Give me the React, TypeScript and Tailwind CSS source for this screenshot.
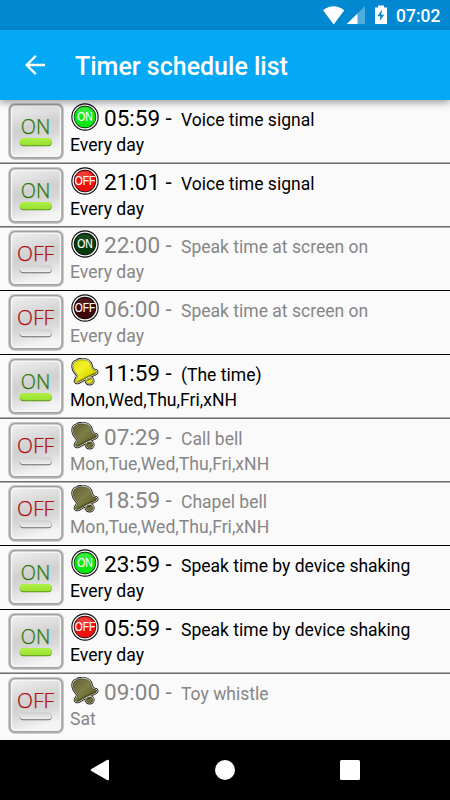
type Kind = 'on' | 'off' | 'bell';

interface Timer {
  enabled: boolean;
  kind: Kind;
  time: string;
  label: string;
  days: string;
}

const TIMERS: Timer[] = [
  { enabled: true, kind: 'on', time: '05:59', label: 'Voice time signal', days: 'Every day' },
  { enabled: true, kind: 'off', time: '21:01', label: 'Voice time signal', days: 'Every day' },
  { enabled: false, kind: 'on', time: '22:00', label: 'Speak time at screen on', days: 'Every day' },
  { enabled: false, kind: 'off', time: '06:00', label: 'Speak time at screen on', days: 'Every day' },
  { enabled: true, kind: 'bell', time: '11:59', label: '(The time)', days: 'Mon,Wed,Thu,Fri,xNH' },
  { enabled: false, kind: 'bell', time: '07:29', label: 'Call bell', days: 'Mon,Tue,Wed,Thu,Fri,xNH' },
  { enabled: false, kind: 'bell', time: '18:59', label: 'Chapel bell', days: 'Mon,Tue,Wed,Thu,Fri,xNH' },
  { enabled: true, kind: 'on', time: '23:59', label: 'Speak time by device shaking', days: 'Every day' },
  { enabled: true, kind: 'off', time: '05:59', label: 'Speak time by device shaking', days: 'Every day' },
  { enabled: false, kind: 'bell', time: '09:00', label: 'Toy whistle', days: 'Sat' },
];

// Rows are 63.75px apart, so heights and divider weights repeat every four rows.
const ROW_HEIGHTS = ['h-[64px]', 'h-[63px]', 'h-[64px]', 'h-[64px]'];
const DIVIDERS = [
  'bottom-0 h-[2px] border-t border-[#adadad] bg-[#6f6f6f]',
  '-bottom-px h-[2px] border-t border-[#6f6f6f] bg-[#adadad]',
  'bottom-0 h-px bg-black',
  'bottom-0 h-px bg-black',
];

// Shared gradients, referenced by id from the row icons.
function Gradients() {
  return (
    <svg width="0" height="0" className="absolute" aria-hidden>
      <defs>
        <linearGradient id="metal" x1="0" y1="0" x2="0.25" y2="1">
          <stop offset="0" stopColor="#f2f2f2" />
          <stop offset="0.5" stopColor="#d0d0d0" />
          <stop offset="0.7" stopColor="#d8d8d8" />
          <stop offset="1" stopColor="#f4f4f4" />
        </linearGradient>
        <linearGradient id="bar-on" x1="0" y1="0" x2="0" y2="1">
          <stop offset="0" stopColor="#b0ee48" />
          <stop offset="1" stopColor="#98e22e" />
        </linearGradient>
        <linearGradient id="bar-off" x1="0" y1="0" x2="0" y2="1">
          <stop offset="0" stopColor="#cecece" />
          <stop offset="1" stopColor="#f0f0f0" />
        </linearGradient>
        <linearGradient id="bell-on" x1="0" y1="0" x2="1" y2="1">
          <stop offset="0" stopColor="#dcdc00" />
          <stop offset="0.35" stopColor="#f2f22c" />
          <stop offset="0.65" stopColor="#e0e000" />
          <stop offset="1" stopColor="#909000" />
        </linearGradient>
        <linearGradient id="bell-off" x1="0" y1="0" x2="1" y2="1">
          <stop offset="0" stopColor="#606034" />
          <stop offset="0.45" stopColor="#7e7e48" />
          <stop offset="1" stopColor="#50501c" />
        </linearGradient>
      </defs>
    </svg>
  );
}

function ToggleButton({ on }: { on: boolean }) {
  return (
    <svg width="56" height="58" viewBox="0 0 56 58" className="block">
      <rect x="1.4" y="1.2" width="53.2" height="54.4" rx="5.5" fill="none" stroke="#000" strokeWidth="2.8" opacity="0.2" />
      <rect x="2" y="1.8" width="52" height="53" rx="5" fill="url(#metal)" stroke="#a0a0a0" strokeWidth="1.6" />
      <rect x="3.6" y="3.4" width="48.8" height="49.8" rx="3.6" fill="none" stroke="#f6f6f6" strokeWidth="1.4" />
      <text
        x="27.5" y="30.9" textAnchor="middle" fontSize="20.3"
        textLength={on ? 29.5 : 37} lengthAdjust="spacingAndGlyphs"
        fill={on ? '#2c7808' : '#b00c12'} stroke={on ? '#2c7808' : '#b00c12'} strokeWidth="0.25"
        className="font-['Open_Sans',sans-serif] font-light"
      >
        {on ? 'ON' : 'OFF'}
      </text>
      <rect x="11.8" y="36" width="32" height="7.2" rx="3.6" fill={on ? '#5c9222' : '#686868'} />
      <rect x="11.8" y="35" width="32" height="7.2" rx="3.6" fill={on ? 'url(#bar-on)' : 'url(#bar-off)'} />
    </svg>
  );
}

function Badge({ kind, bright }: { kind: 'on' | 'off'; bright: boolean }) {
  const fill = kind === 'on' ? (bright ? '#08e810' : '#043a08') : bright ? '#f01010' : '#400608';
  return (
    <svg width="28" height="28" viewBox="0 0 28 28" className="block">
      <circle cx="14" cy="14" r="13.7" fill="#0c0c0c" />
      <circle cx="14" cy="14" r="11.9" fill="none" stroke="#f8f8f8" strokeWidth="1.4" />
      <circle cx="14" cy="14" r="10.6" fill={fill} />
      <ellipse cx="13.5" cy="8.4" rx="7" ry="4" fill="#fff" opacity={bright ? 0.18 : 0.08} />
      <text
        x="14" y="18.2" textAnchor="middle" fontSize="12" fill="#fff" stroke="#fff" strokeWidth="0.15"
        textLength={kind === 'on' ? 15.5 : 20.5} lengthAdjust="spacingAndGlyphs"
        className="font-['Liberation_Sans',sans-serif]"
      >
        {kind === 'on' ? 'ON' : 'OFF'}
      </text>
    </svg>
  );
}

function Bell({ bright }: { bright: boolean }) {
  const body = 'M2.2 6.4C2.8 4.2 4.6 3.4 6 3.2C7 1.7 9.4 1.6 11.4 2.1C14.6 1.6 17.4 2.6 19 5C20.6 7.6 20.2 10.4 22.2 11.8L25.6 13C26.2 14 25.4 15.2 23.8 16L16 19.4L7.2 24.4C5.8 25 4.2 24 4.4 22.8C4.8 21.2 7 19.6 6.6 17.6C6 15 3.4 14.4 2.6 11.4C2.2 9.8 1.8 8 2.2 6.4Z';
  const fill = bright ? 'url(#bell-on)' : 'url(#bell-off)';
  return (
    <svg width="28" height="29" viewBox="0 0 28 29" className="block overflow-visible">
      <g fill="#141414" stroke="#141414" strokeWidth="3.4" strokeLinejoin="round">
        <path d={body} />
        <ellipse cx="18.6" cy="22.8" rx="3.3" ry="2.9" />
      </g>
      <g fill="#f4f4ec" stroke="#f4f4ec" strokeWidth="1.7" strokeLinejoin="round">
        <path d={body} />
        <ellipse cx="18.6" cy="22.8" rx="3.3" ry="2.9" />
      </g>
      <g fill={fill} stroke={bright ? '#585804' : '#2c2c10'} strokeWidth="0.5">
        <ellipse cx="18.6" cy="22.8" rx="3.3" ry="2.9" />
        <path d={body} />
      </g>
      <path d="M6.2 24L16 18.8L24.8 14.8" fill="none" stroke="#2c2c04" strokeWidth="1.1" opacity="0.5" />
      <path d="M16.2 22.4L20 20.6" stroke="#222" strokeWidth="0.9" />
    </svg>
  );
}

function TimerRow({ timer, index, last }: { timer: Timer; index: number; last: boolean }) {
  return (
    <li className={`relative flex pl-2 ${ROW_HEIGHTS[index % 4]} ${timer.enabled ? 'text-black' : 'text-[#868686]'}`}>
      <div className="pt-[3px]">
        <ToggleButton on={timer.enabled} />
      </div>
      <div className="ml-1.5 whitespace-nowrap">
        <div className="flex h-8 items-start">
          <div className="ml-px w-[33px] pt-[3px]">
            {timer.kind === 'bell' ? <Bell bright={timer.enabled} /> : <Badge kind={timer.kind} bright={timer.enabled} />}
          </div>
          <span className="mt-[4px] w-[77px] text-[22.5px] leading-7">{timer.time} -</span>
          <span className="mt-[6px] text-[17.55px] leading-7">{timer.label}</span>
        </div>
        <div className="text-[17.6px] leading-[26px]">{timer.days}</div>
      </div>
      {!last && <div className={`absolute inset-x-0 ${DIVIDERS[index % 4]}`} />}
    </li>
  );
}

function StatusBar() {
  return (
    <div className="flex h-[30px] items-center bg-[#0288d1] text-white">
      <svg width="66" height="24" viewBox="0 -1 66 24" className="ml-[322px]" fill="#fff">
        <path d="M1 6.3Q11.5-1.8 22.3 6.3L11.7 20.6Z" />
        <path d="M43 2V20H24.8Z" opacity="0.3" />
        <path d="M35.5 9.5V20H24.8Z" />
        <path fillRule="evenodd" d="M53 3.5H56V1.5H62V3.5H65V20H53ZM60 5.5L55.5 12.2H58.4L57.7 17L62.2 10.7H59.3Z" />
      </svg>
      <span className="ml-2 pt-px text-[17.5px] font-medium leading-[30px]">07:02</span>
    </div>
  );
}

export default function App() {
  return (
    <div className="flex h-[800px] w-[450px] flex-col overflow-hidden bg-[#fafafa] font-[Roboto,sans-serif]">
      <Gradients />
      <StatusBar />
      <header className="relative z-10 flex h-[70px] items-center bg-[#03a9f4] text-white shadow-[0_3px_7px_rgba(0,0,0,0.35)]">
        <svg width="20" height="20" viewBox="0 0 20 20" className="ml-[25px]" fill="none" stroke="#fff" strokeWidth="2.3">
          <path d="M20 10H2M10.8 0.9L1.7 10L10.8 19.1" />
        </svg>
        <h1 className="ml-[30px] pt-[3px] text-[25px] font-medium leading-8">Timer schedule list</h1>
      </header>
      <ul className="min-h-0 flex-1">
        {TIMERS.map((timer, i) => (
          <TimerRow key={i} timer={timer} index={i} last={i === TIMERS.length - 1} />
        ))}
      </ul>
      <nav className="flex h-[60px] items-center bg-black">
        <svg width="450" height="60" viewBox="0 0 450 60" fill="#fff">
          <path d="M91.4 29L107 20Q109 19.2 109 21V39Q109 40.8 107 40L91.4 31Q90 30 91.4 29Z" />
          <circle cx="225" cy="30" r="10" />
          <rect x="340" y="20" width="20" height="20" rx="1.5" />
        </svg>
      </nav>
    </div>
  );
}
